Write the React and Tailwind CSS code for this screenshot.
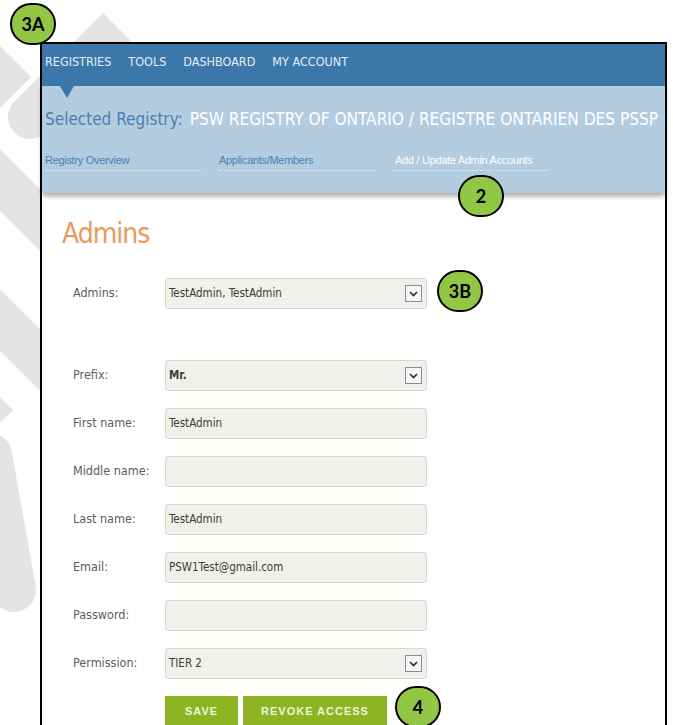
import React from "react";

// condensed face used across the registry screen
const NARROW = "font-['DejaVu_Sans_Condensed','Liberation_Sans',Arial,sans-serif]";

const NAV = ["REGISTRIES", "TOOLS", "DASHBOARD", "MY ACCOUNT"];

const TABS = [
  { label: "Registry Overview", active: false },
  { label: "Applicants/Members", active: false },
  { label: "Add / Update Admin Accounts", active: true },
];

const FIELDS = [
  { label: "Prefix:", value: "Mr.", select: true, bold: true },
  { label: "First name:", value: "TestAdmin" },
  { label: "Middle name:", value: "" },
  { label: "Last name:", value: "TestAdmin" },
  { label: "Email:", value: "PSW1Test@gmail.com" },
  { label: "Password:", value: "" },
  { label: "Permission:", value: "TIER 2", select: true },
];

function Watermark() {
  return (
    <svg className="absolute left-0 top-0" width="673" height="725" viewBox="0 0 673 725">
      <g fill="none" stroke="#e4e4e4" strokeWidth="44" strokeLinejoin="miter" strokeLinecap="round">
        <path d="M -40 37 L 0 77 L -40 117" />
        <path d="M 30 117 L 103 44 L 180 121" />
        <path d="M -30 150 L 70 250" />
        <path d="M -30 290 L 70 390" />
        <path d="M -80 348 L -18 410 L -80 472" />
        <path d="M -10 455 L 14 590" />
      </g>
    </svg>
  );
}

function Badge({ label, className }) {
  return (
    <div
      className={`absolute z-20 flex h-[42px] w-[46px] items-center justify-center rounded-full border-2 border-black bg-[#92c746] font-['Lato',sans-serif] text-[18px] font-bold text-black ${className}`}
    >
      {label}
    </div>
  );
}

function SelectArrow() {
  return (
    <span className="flex h-[17px] w-[17px] items-center justify-center border border-[#8c8c8c] bg-[#f6f6f6]">
      <svg width="9" height="6" viewBox="0 0 9 6">
        <path d="M1 1 L4.5 4.5 L8 1" fill="none" stroke="#2e2e2e" strokeWidth="1.6" />
      </svg>
    </span>
  );
}

function Field({ label, value, select, bold }) {
  return (
    <div className="flex items-center">
      <div className={`w-[92px] text-[12.5px] text-[#5c5c5c] ${NARROW}`}>{label}</div>
      <div
        className={`flex h-[31px] w-[262px] items-center justify-between rounded-[3px] border border-[#d9d8d0] bg-[#f1f0eb] pl-[3px] pr-[4px] text-[11.5px] text-[#3c3c3c] ${NARROW} ${bold ? "font-bold" : ""}`}
      >
        <span>{value}</span>
        {select && <SelectArrow />}
      </div>
    </div>
  );
}

export default function App() {
  return (
    <div className="relative h-[725px] w-[673px] overflow-hidden bg-white font-['Liberation_Sans',Arial,sans-serif]">
      <Watermark />
      <Badge label="3A" className="left-[10px] top-[3px]" />

      <div className="relative z-10 ml-[40px] mt-[42px] w-[627px] border-2 border-black bg-white pb-[20px]">
        {/* top navigation */}
        <nav className={`flex h-[42px] gap-[17px] bg-[#3b78a9] pl-[3px] pt-[11px] text-[12.5px] leading-[13px] text-[#e4edf6] ${NARROW}`}>
          {NAV.map((n) => (
            <span key={n}>{n}</span>
          ))}
        </nav>

        {/* selected registry band */}
        <div className="relative z-10 h-[107px] bg-[#b3cce0] pl-[3px] pt-[25px] shadow-[0_3px_5px_rgba(0,0,0,0.35)]">
          <span className="absolute left-[18px] top-0 h-0 w-0 border-l-[7px] border-r-[7px] border-t-[12px] border-l-transparent border-r-transparent border-t-[#3b78a9]" />
          <div className="flex h-[18px] items-baseline whitespace-nowrap leading-none">
            <span className={`text-[17px] text-[#4a80ae] ${NARROW}`}>Selected Registry:</span>
            <span className={`ml-[7px] text-[17.1px] text-white ${NARROW}`}>
              PSW REGISTRY OF ONTARIO / REGISTRE ONTARIEN DES PSSP
            </span>
          </div>
          <div className="mt-[26px] flex gap-[18px]">
            {TABS.map((t) => (
              <div
                key={t.label}
                className={`w-[156px] border-b border-dotted border-[#e8eff6] pb-[4px] text-[11px] leading-[11px] tracking-[-0.3px] ${t.active ? "pl-[2px] text-white" : "text-[#4a7fb0]"}`}
              >
                {t.label}
              </div>
            ))}
          </div>
        </div>

        {/* admin form */}
        <div className="pl-[20px] pt-[27px]">
          <h1 className={`text-[28px] leading-none tracking-[-1px] text-[#e99a5a] ${NARROW}`}>Admins</h1>
          <div className="mt-[30px] pl-[11px]">
            <Field label="Admins:" value="TestAdmin, TestAdmin" select />
          </div>
          <div className="mt-[51px] flex flex-col gap-[17px] pl-[11px]">
            {FIELDS.map((f) => (
              <Field key={f.label} {...f} />
            ))}
            <div className="flex gap-[5px] pl-[92px]">
              <button className="h-[30px] w-[73px] bg-[#8db523] text-[11px] font-bold tracking-[1px] text-[#eef4dc]">SAVE</button>
              <button className="h-[30px] w-[144px] bg-[#8db523] text-[11px] font-bold tracking-[1px] text-[#eef4dc]">
                REVOKE ACCESS
              </button>
            </div>
          </div>
        </div>
      </div>

      <Badge label="2" className="left-[458px] top-[175px]" />
      <Badge label="3B" className="left-[437px] top-[270px]" />
      <Badge label="4" className="left-[395px] top-[686px]" />
    </div>
  );
}
